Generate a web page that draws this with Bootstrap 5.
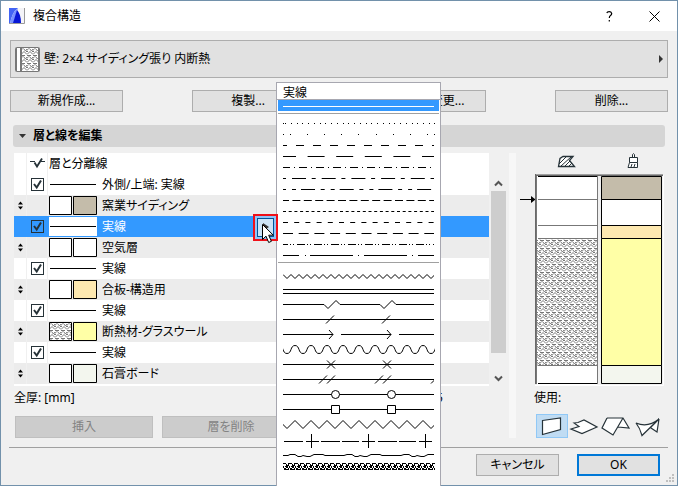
<!DOCTYPE html>
<html lang="ja">
<head>
<meta charset="utf-8">
<meta name="viewport" content="width=device-width, initial-scale=1">
<title>複合構造</title>
<link href="https://cdn.jsdelivr.net/npm/bootstrap@5.3.0/dist/css/bootstrap.min.css" rel="stylesheet">
<style>
body{font:12px/20px "Noto Sans","Noto Sans CJK JP",sans-serif;font-feature-settings:"palt";color:#000;background:#f0f0f0}
svg{display:block;flex:none}
button{font-feature-settings:inherit}
.dialog{min-height:100vh;border:1px solid #7291ab;background:#f0f0f0;overflow:hidden}
.titlebar{height:30px;background:#fff;padding:0 0 0 8px}
.titlebar .btn{width:45px;height:28px;color:#000}
.dlg-btn{--bs-btn-color:#000;--bs-btn-bg:#e1e1e1;--bs-btn-border-color:#adadad;--bs-btn-border-radius:0;--bs-btn-font-size:12px;--bs-btn-line-height:20px;--bs-btn-padding-y:0;--bs-btn-padding-x:0;--bs-btn-disabled-color:#838383;--bs-btn-disabled-bg:#ccc;--bs-btn-disabled-border-color:#bfbfbf;--bs-btn-disabled-opacity:1;height:22px}
.w-cmd{width:113px}.w-edit{width:138px}.w-foot{width:83px}
.ok{border:2px solid #0078d7;line-height:18px}
.combo{margin:9px 9px 0;height:38px;padding:0 4px!important}
.commands{margin:12px 9px 0}
.section-head{margin:13px 12px 0;height:22px;background:#d5d5d5;border:0;border-radius:3px;padding:0 6px;gap:7px;font-weight:700;text-align:left;color:#000}
.main-area{margin:6px 13px 0 13px}
.list-frame{height:233px;background:#fff;overflow:hidden}
.layers{width:100%;border-collapse:separate;border-spacing:0}
.layers td,.layers th{height:21px;padding:0;font-weight:400;line-height:20px;vertical-align:middle}
.layers th:not(:last-child),.layers td:not(:last-child){border-right:1px solid #f0f0f0}
.layers .c-move{width:13px}.layers .c-tick{width:21px}
.layers td svg,.layers th svg{margin:auto}
.layers .skin td{background:#ececec}
.layers .chosen td{background:#3399ff;color:#fff;border-color:#3399ff}
.item{display:flex;align-items:center;gap:5px;padding-left:1px;position:relative}
.item svg{margin:0!important}
.tick{appearance:none;display:block;width:13px;height:13px;margin:auto;border:1px solid #263238;background:#fff url("data:image/svg+xml,%3Csvg xmlns='http://www.w3.org/2000/svg' viewBox='0 0 11 11'%3E%3Cpath d='M2 5l2.700 3.500L9 1.500' fill='none' stroke='%23263238' stroke-width='2'/%3E%3C/svg%3E")}
.chosen .tick{background-color:#3399ff}
.picker{position:absolute;left:205px;top:-3px;width:25px;height:27px;border:2px solid #f01018;background:#8fc4f8;padding:2px;z-index:5}
.picker button{display:block;width:100%;height:100%;border:1px solid #005499;background:#cce4f7;padding:0}
.picker svg{position:absolute;left:5px;top:6px}
.scroller{width:17px;padding:23px 0 0 1px}
.scroller svg{margin:auto}
.thumb{height:162px;width:15px;background:#cdcdcd;margin:0 1px}
.strip{width:7px;margin:0 4px 0 3px;background:#f7f7f7}
.total{height:30px;line-height:24px;padding-right:63px}
.edit-row{gap:9px;padding-left:1px}
.side{width:144px}
.use-label{line-height:24px;height:28px;padding-left:14px}
.uses{padding-left:16px}
.use{width:32px;height:24px;border:1px solid transparent;background:none;padding:0}
.use.on{background:#c0dcf3;border-color:#90c8f6}
.footer-bar{margin:9px 9px 0 8px;border-top:1px solid #a0a0a0;padding:6px 8px 8px;gap:18px}
.line-menu{position:absolute;left:276px;top:82px;bottom:0;width:165px;background:#fff;border:1px solid #a7a7b0;border-bottom:0;z-index:3}
.menu-title{height:17px;line-height:19px;padding-left:6px;border-bottom:1px solid #a7a7b0}
.line-menu button{display:block;width:100%;border:0;background:none;padding:0 0 0 6px;overflow:hidden}
.line-menu .sel{background:#3399ff;border:solid #fff;border-width:0 1px;padding-left:5px}
.line-menu hr{margin:2px 1px 4px;border:0;border-top:1px solid #a0a0a0;opacity:1}
.line-menu hr.second{margin:1px 1px 6px}
.line-menu svg{fill:none;stroke:#000;stroke-width:1}
.grip{position:absolute;right:3px;bottom:3px}
</style>
<script src="https://cdn.jsdelivr.net/npm/bootstrap@5.3.0/dist/js/bootstrap.bundle.min.js"></script>
</head>
<body>
<svg width="0" height="0" class="position-absolute" aria-hidden="true">
<defs>
<pattern id="wool" width="6" height="8" patternUnits="userSpaceOnUse"><path d="M0 .5H4M5 4.500H6M0 4.500H1" stroke="#777"/><path d="M0 3.500L1.500 1.500M2.500 1.500L4.500 4M4.500 4L6 2M0 7.500L3 4.500L6 7.500" stroke="#777" fill="none"/></pattern>
<pattern id="hatch" width="6" height="7" patternUnits="userSpaceOnUse"><path d="M0 .5H2.500L4.500 3.500L6 .5M0 3.500L2 6.500M2 3.500H4L2 6.500H6M4 3.500L6 6.500" stroke="#000" fill="none" shape-rendering="crispEdges"/></pattern>
<symbol id="move" viewBox="0 0 7 9"><path d="M1 3.500L3.500 .5L6 3.500ZM1 5.500L3.500 8.500L6 5.500Z" fill="#000"/></symbol>
<symbol id="solid" viewBox="0 0 48 19"><path d="M1 9.500H47" stroke="#000"/></symbol>
</defs></svg>
<div class="dialog position-relative d-flex flex-column">
<header class="titlebar d-flex align-items-center">
<svg width="16" height="16" viewBox="0 0 16 16"><rect width="16" height="16" fill="#f4f4f8"/><path d="M0 0H9Q3 4 1 16H0Z" fill="#4264f5"/><path d="M1 16Q3 4 9 0L6 10 5 16Z" fill="#7892ff"/><path d="M4 15L8 2Q12 6 12 15Z" fill="#0716d5"/><path d="M0 15.500H15.500V0" fill="none" stroke="#999"/></svg>
<span class="ms-2 flex-grow-1">複合構造</span>
<button class="btn p-0 border-0" aria-label="ヘルプ"><svg class="mx-auto" width="7" height="11" viewBox="0 0 7 11"><path d="M.8 2Q1.200 .7 3.200 .7T5.700 2.500Q5.700 3.700 4.500 4.500T3.300 7M3.300 9V10.400" fill="none" stroke="#000" stroke-width="1.200"/></svg></button>
<button class="btn p-0 border-0" aria-label="閉じる"><svg class="mx-auto" width="11" height="11" viewBox="0 0 11 11"><path d="M.5 .5L10.500 10.500M10.500 .5L.5 10.500" stroke="#000"/></svg></button>
</header>
<button class="btn dlg-btn combo d-flex align-items-center">
<svg width="25" height="25" viewBox="0 0 25 25"><rect x=".5" y=".5" width="24" height="24" fill="#fff" stroke="#777" rx="1"/><rect x="6" y="1" width="18" height="23" fill="url(#wool)"/><path d="M1.500 1V24M5.500 0V25M6.500 1V24M23.500 1V24" stroke="#777"/></svg>
<span class="ms-1 flex-grow-1 text-start">壁: 2×4 サイディング張り 内断熱</span>
<svg width="4" height="8" viewBox="0 0 4 8"><path d="M0 0L4 4L0 8Z" fill="#333"/></svg>
</button>
<div class="commands d-flex justify-content-between">
<button class="btn dlg-btn w-cmd">新規作成...</button><button class="btn dlg-btn w-cmd">複製...</button><button class="btn dlg-btn w-cmd">名称の変更...</button><button class="btn dlg-btn w-cmd">削除...</button>
</div>
<button class="section-head d-flex align-items-center"><svg width="7" height="4" viewBox="0 0 7 4"><path d="M0 0H7L3.500 4Z" fill="#333"/></svg>層と線を編集</button>
<main class="main-area d-flex">
<section class="flex-grow-1">
<div class="d-flex">
<div class="list-frame flex-grow-1">
<table class="layers">
<thead><tr><th class="c-move"></th><th class="c-tick"><svg width="15" height="11" viewBox="0 0 15 11"><path d="M0 3.500H5M10 3.500H15" stroke="#263238"/><path d="M4.500 4.500L7 8.500L12 .5" fill="none" stroke="#263238" stroke-width="1.800"/></svg></th><th><div class="item">層と分離線</div></th></tr></thead>
<tbody>
<tr><td></td><td><input class="tick" type="checkbox" checked aria-label="外側/上端"></td><td><div class="item"><svg width="48" height="19"><use href="#solid"/></svg>外側/上端: 実線</div></td></tr>
<tr class="skin"><td><svg width="7" height="9"><use href="#move"/></svg></td><td></td><td><div class="item"><svg width="48" height="19"><path d="M.5 .5H22.500V18.500H.5Z" fill="#fff" stroke="#000"/><path d="M24.500 .5H47.500V18.500H24.500Z" fill="#c4bcaa" stroke="#000"/></svg>窯業サイディング</div></td></tr>
<tr class="chosen"><td></td><td><input class="tick" type="checkbox" checked aria-label="実線 1"></td><td><div class="item"><svg width="48" height="19"><rect width="48" height="19" fill="#fff"/><use href="#solid"/></svg>実線
<span class="picker"><button aria-label="線種を選択"></button><svg width="15" height="22" viewBox="0 0 15 22"><path d="M3 1L9 5 3 9Z" fill="#333"/><path d="M2.500 2.500V17.500L6 14.200L8.700 20.500L11.400 19.300L8.700 13.200H13.300Z" fill="#fff" stroke="#000"/></svg></span></div></td></tr>
<tr class="skin"><td><svg width="7" height="9"><use href="#move"/></svg></td><td></td><td><div class="item"><svg width="48" height="19"><path d="M.5 .5H22.500V18.500H.5ZM24.500 .5H47.500V18.500H24.500Z" fill="#fff" stroke="#000"/></svg>空気層</div></td></tr>
<tr><td></td><td><input class="tick" type="checkbox" checked aria-label="実線 2"></td><td><div class="item"><svg width="48" height="19"><use href="#solid"/></svg>実線</div></td></tr>
<tr class="skin"><td><svg width="7" height="9"><use href="#move"/></svg></td><td></td><td><div class="item"><svg width="48" height="19"><path d="M.5 .5H22.500V18.500H.5Z" fill="#fff" stroke="#000"/><path d="M24.500 .5H47.500V18.500H24.500Z" fill="#fde8b0" stroke="#000"/></svg>合板-構造用</div></td></tr>
<tr><td></td><td><input class="tick" type="checkbox" checked aria-label="実線 3"></td><td><div class="item"><svg width="48" height="19"><use href="#solid"/></svg>実線</div></td></tr>
<tr class="skin"><td><svg width="7" height="9"><use href="#move"/></svg></td><td></td><td><div class="item"><svg width="48" height="19"><rect width="23" height="19" fill="#fff"/><path d="M.5 .5H22.500V18.500H.5Z" fill="url(#wool)" stroke="#000"/><path d="M24.500 .5H47.500V18.500H24.500Z" fill="#ffffa6" stroke="#000"/></svg>断熱材-グラスウール</div></td></tr>
<tr><td></td><td><input class="tick" type="checkbox" checked aria-label="実線 4"></td><td><div class="item"><svg width="48" height="19"><use href="#solid"/></svg>実線</div></td></tr>
<tr class="skin"><td><svg width="7" height="9"><use href="#move"/></svg></td><td></td><td><div class="item"><svg width="48" height="19"><path d="M.5 .5H22.500V18.500H.5Z" fill="#fff" stroke="#000"/><path d="M24.500 .5H47.500V18.500H24.500Z" fill="#f3f6ee" stroke="#000"/></svg>石膏ボード</div></td></tr>
</tbody></table>
</div>
<div class="scroller d-flex flex-column">
<svg class="mt-1 mb-1" width="9" height="7" viewBox="0 0 9 7"><path d="M1 5.500L4.500 2L8 5.500" fill="none" stroke="#555" stroke-width="2"/></svg>
<div class="thumb"></div>
<svg class="mt-auto mb-1" width="9" height="7" viewBox="0 0 9 7"><path d="M1 1.500L4.500 5L8 1.500" fill="none" stroke="#555" stroke-width="2"/></svg>
</div>
</div>
<div class="total d-flex justify-content-between"><span>全厚: [mm]</span><span>235.5</span></div>
<div class="edit-row d-flex"><button class="btn dlg-btn w-edit" disabled>挿入</button><button class="btn dlg-btn w-edit" disabled>層を削除</button></div>
</section>
<div class="strip"></div>
<section class="side">
<svg width="144" height="233" viewBox="520 153 144 233" role="img" aria-label="断面プレビュー">
<g fill="none" stroke="#263238"><path d="M558.500 166.500L560 158.500L563 156.500H573L569.500 160.500L574.500 166.500Z" fill="#fff" stroke-width="1.300"/><path d="M559 164L566 157M561 166L571 157M565 166L570 161M569 166L572 163"/>
<path d="M632.500 157.500V154.500Q633.500 152.800 634.500 154.500V157.500M629.500 162.500V157.500H637.500V162.500ZM629.500 162.500L628 167.500H637.500V162.500M631 167L632 164M634 167L635 164" fill="#fff"/></g>
<path d="M520 199.500H532" stroke="#000"/><path d="M531 196L535.500 199.500L531 203Z"/>
<path d="M535 174.500H663" stroke="#a0a0a0"/><path d="M535.500 174V384M535 175.500H663" fill="none" stroke="#696969"/>
<path d="M537 176H597V385H537Z" fill="#fff"/><path d="M537 239H597V366H537Z" fill="url(#wool)"/>
<path d="M536.500 176V384M597.500 176V384M538 199.500H597M538 225.500H597M538 238.500H597M538 365.500H597" stroke="#777"/>
<path d="M598 176H601V385H598Z" fill="#f0f0f0"/><path d="M538 176.500H597M538 383.500H597" stroke="#000"/>
<g stroke="#000"><path d="M601.500 176.500H661.500V199.500H601.500Z" fill="#c4bcaa"/><path d="M601.500 199.500H661.500V225.500H601.500Z" fill="#fff"/><path d="M601.500 225.500H661.500V238.500H601.500Z" fill="#fde8b0"/><path d="M601.500 238.500H661.500V365.500H601.500Z" fill="#ffffa6"/><path d="M601.500 365.500H661.500V383.500H601.500Z" fill="#f3f6ee"/></g>
<path d="M535 385.500H663.500V175" fill="none" stroke="#fff"/>
</svg>
<div class="use-label">使用:</div>
<div class="uses d-flex">
<button class="use on" aria-label="壁"><svg width="30" height="22" viewBox="0 0 30 22"><path d="M5.500 5.500L23.500 3V14.500L5.500 19.500Z" fill="#fff" stroke="#263238" stroke-width="1.200"/></svg></button>
<button class="use" aria-label="スラブ"><svg width="30" height="22" viewBox="0 0 30 22"><path d="M5 8L9 7.500L15 5L28 12L13 18.500L2 14L10 11.500Z" fill="#fff" stroke="#263238" stroke-width="1.200"/></svg></button>
<button class="use" aria-label="屋根"><svg width="30" height="22" viewBox="0 0 30 22"><path d="M6 3H22L28 13L17 12M22 3L12 20L1 13L6 3" fill="#fff" stroke="#263238" stroke-width="1.200"/></svg></button>
<button class="use" aria-label="シェル"><svg width="30" height="22" viewBox="0 0 30 22"><path d="M3 8Q15 13 26 4L9 20.500Q7 13 3 8ZM26 4L24 17L18 13M26 4L17 13" fill="#fff" stroke="#263238" stroke-width="1.200"/></svg></button>
</div>
</section>
</main>
<footer class="footer-bar d-flex justify-content-end"><button class="btn dlg-btn w-foot">キャンセル</button><button class="btn dlg-btn w-foot ok">OK</button></footer>
<svg class="grip" width="8" height="8" viewBox="0 0 8 8"><path d="M6 0h2v2h-2zM3 3h2v2h-2zM6 3h2v2h-2zM0 6h2v2h-2zM3 6h2v2h-2zM6 6h2v2h-2z" fill="#bfbfbf"/></svg>
</div>
<div class="line-menu" role="listbox" aria-label="線種">
<div class="menu-title">実線</div>
<button class="sel" role="option"><svg width="151" height="11"><path d="M0 6.500H151" stroke="#fff"/></svg></button>
<hr>
<button><svg width="152" height="11"><path d="M0 5.500H1M151 5.500H152"/><path d="M2 5.500H152" stroke-dasharray="1 4.750" shape-rendering="crispEdges"/></svg></button>
<button><svg width="152" height="11"><path d="M0 5.500H1M151 5.500H152"/><path d="M7 5.500H152" stroke-dasharray="1 16.100" shape-rendering="crispEdges"/></svg></button>
<button><svg width="151" height="11"><path d="M0 5.500H151" stroke-dasharray="8 9" stroke-dashoffset="4"/></svg></button>
<button><svg width="151" height="11"><path d="M0 5.500H151" stroke-dasharray="17 11.600" stroke-dashoffset="4"/></svg></button>
<button><svg width="151" height="11"><path d="M0 5.500H151" stroke-dasharray="8 4 1 4" stroke-dashoffset="1"/></svg></button>
<button><svg width="151" height="11"><path d="M0 5.500H151" stroke-dasharray="4 6 14 5.700" stroke-dashoffset="1"/></svg></button>
<button><svg width="151" height="11"><path d="M0 5.500H151" stroke-dasharray="4 6 4 5 14 5.700" stroke-dashoffset="1"/></svg></button>
<button><svg width="151" height="11"><path d="M0 5.500H151" stroke-dasharray="8 3.400" stroke-dashoffset="2"/></svg></button>
<button><svg width="151" height="11"><path d="M0 5.500H151" stroke-dasharray="3 2.700"/></svg></button>
<button><svg width="151" height="11"><path d="M0 5.500H151" stroke-dasharray="5 6.200"/></svg></button>
<button><svg width="151" height="11"><path d="M0 5.500H151" stroke-dasharray="10 5.700"/></svg></button>
<button><svg width="151" height="11"><path d="M0 5.500H151" stroke-dasharray="8 2 1 2 1 3" stroke-dashoffset="3"/></svg></button>
<button><svg width="151" height="11"><path d="M0 5.500H16M22 5.500H23M27 5.500H70M75 5.500H76M81 5.500H124M129 5.500H130M135 5.500H151"/></svg></button>
<hr class="second">
<button><svg width="151" height="15"><path d="M0 5.500l4 4 4-4 4 4 4-4 4 4 4-4 4 4 4-4 4 4 4-4 4 4 4-4 4 4 4-4 4 4 4-4 4 4 4-4 4 4 4-4 4 4 4-4 4 4 4-4 4 4 4-4 4 4 4-4 4 4 4-4 4 4 4-4 4 4 4-4 4 4 4-4 4 4 4-4"/></svg></button>
<button><svg width="151" height="15"><path d="M0 5.500H151M0 9.500H151"/></svg></button>
<button><svg width="151" height="15"><path d="M0 5.500H41L45 9.500L53 1.500L57 5.500H97L101 9.500L109 1.500L113 5.500H151"/></svg></button>
<button><svg width="151" height="15"><path d="M0 5.500H151M43 9.500L51 1.500M99 9.500L107 1.500"/></svg></button>
<button><svg width="151" height="15"><path d="M0 5.500H50M46 1L50 5.500L46 10M58 5.500H108M104 1L108 5.500L104 10M116 5.500H151"/></svg></button>
<button><svg width="152" height="15"><path d="M-4 1.500c5 0 3 8 8 8s3-8 8-8 3 8 8 8 3-8 8-8 3 8 8 8 3-8 8-8 3 8 8 8 3-8 8-8 3 8 8 8 3-8 8-8 3 8 8 8 3-8 8-8 3 8 8 8 3-8 8-8 3 8 8 8 3-8 8-8 3 8 8 8 3-8 8-8 3 8 8 8 3-8 8-8"/></svg></button>
<button><svg width="151" height="15"><path d="M0 5.500H151M44 1.500L52 9.500M44 9.500L52 1.500M100 1.500L108 9.500M100 9.500L108 1.500"/></svg></button>
<button><svg width="151" height="15"><path d="M0 5.500H151M36 9.500L44 1.500M44 9.500L52 1.500M92 9.500L100 1.500M100 9.500L108 1.500M148 9.500L156 1.500"/></svg></button>
<button><svg width="151" height="15"><path d="M0 5.500H151"/><g fill="#fff"><circle cx="52.500" cy="5.500" r="4"/><circle cx="108.500" cy="5.500" r="4"/></g></svg></button>
<button><svg width="151" height="15"><path d="M0 5.500H151"/><path d="M48.500 1.500h8v8h-8zM104.500 1.500h8v8h-8z" fill="#fff"/></svg></button>
<button><svg width="151" height="15"><path d="M-4 1.500l8 8 8-8 8 8 8-8 8 8 8-8 8 8 8-8 8 8 8-8 8 8 8-8 8 8 8-8 8 8 8-8 8 8 8-8 8 8 8-8"/></svg></button>
<button><svg width="151" height="15"><path d="M1 7.500H20M23 7.500H36M38 7.500H57M59 7.500H76M79 7.500H92M95 7.500H114M116 7.500H133M136 7.500H149M28.500 0V14M85.500 0V14M142.500 0V14"/></svg></button>
<button><svg width="151" height="11"><path d="M0 6.500H5L7 5.500H12L15 7.500H18L20 6.500L24 7.500H27L31 5.500H40L42 6.500H61L64 5.500H69L72 7.500H75L77 6.500L81 7.500H84L88 5.500H97L99 6.500H118L121 5.500H126L129 7.500H132L134 6.500L138 7.500H141L145 5.500H151"/></svg></button>
<button><svg width="152" height="12"><g transform="translate(0 3)"><rect width="152" height="7" fill="url(#hatch)" stroke="none"/></g></svg></button>
</div>
</body>
</html>
